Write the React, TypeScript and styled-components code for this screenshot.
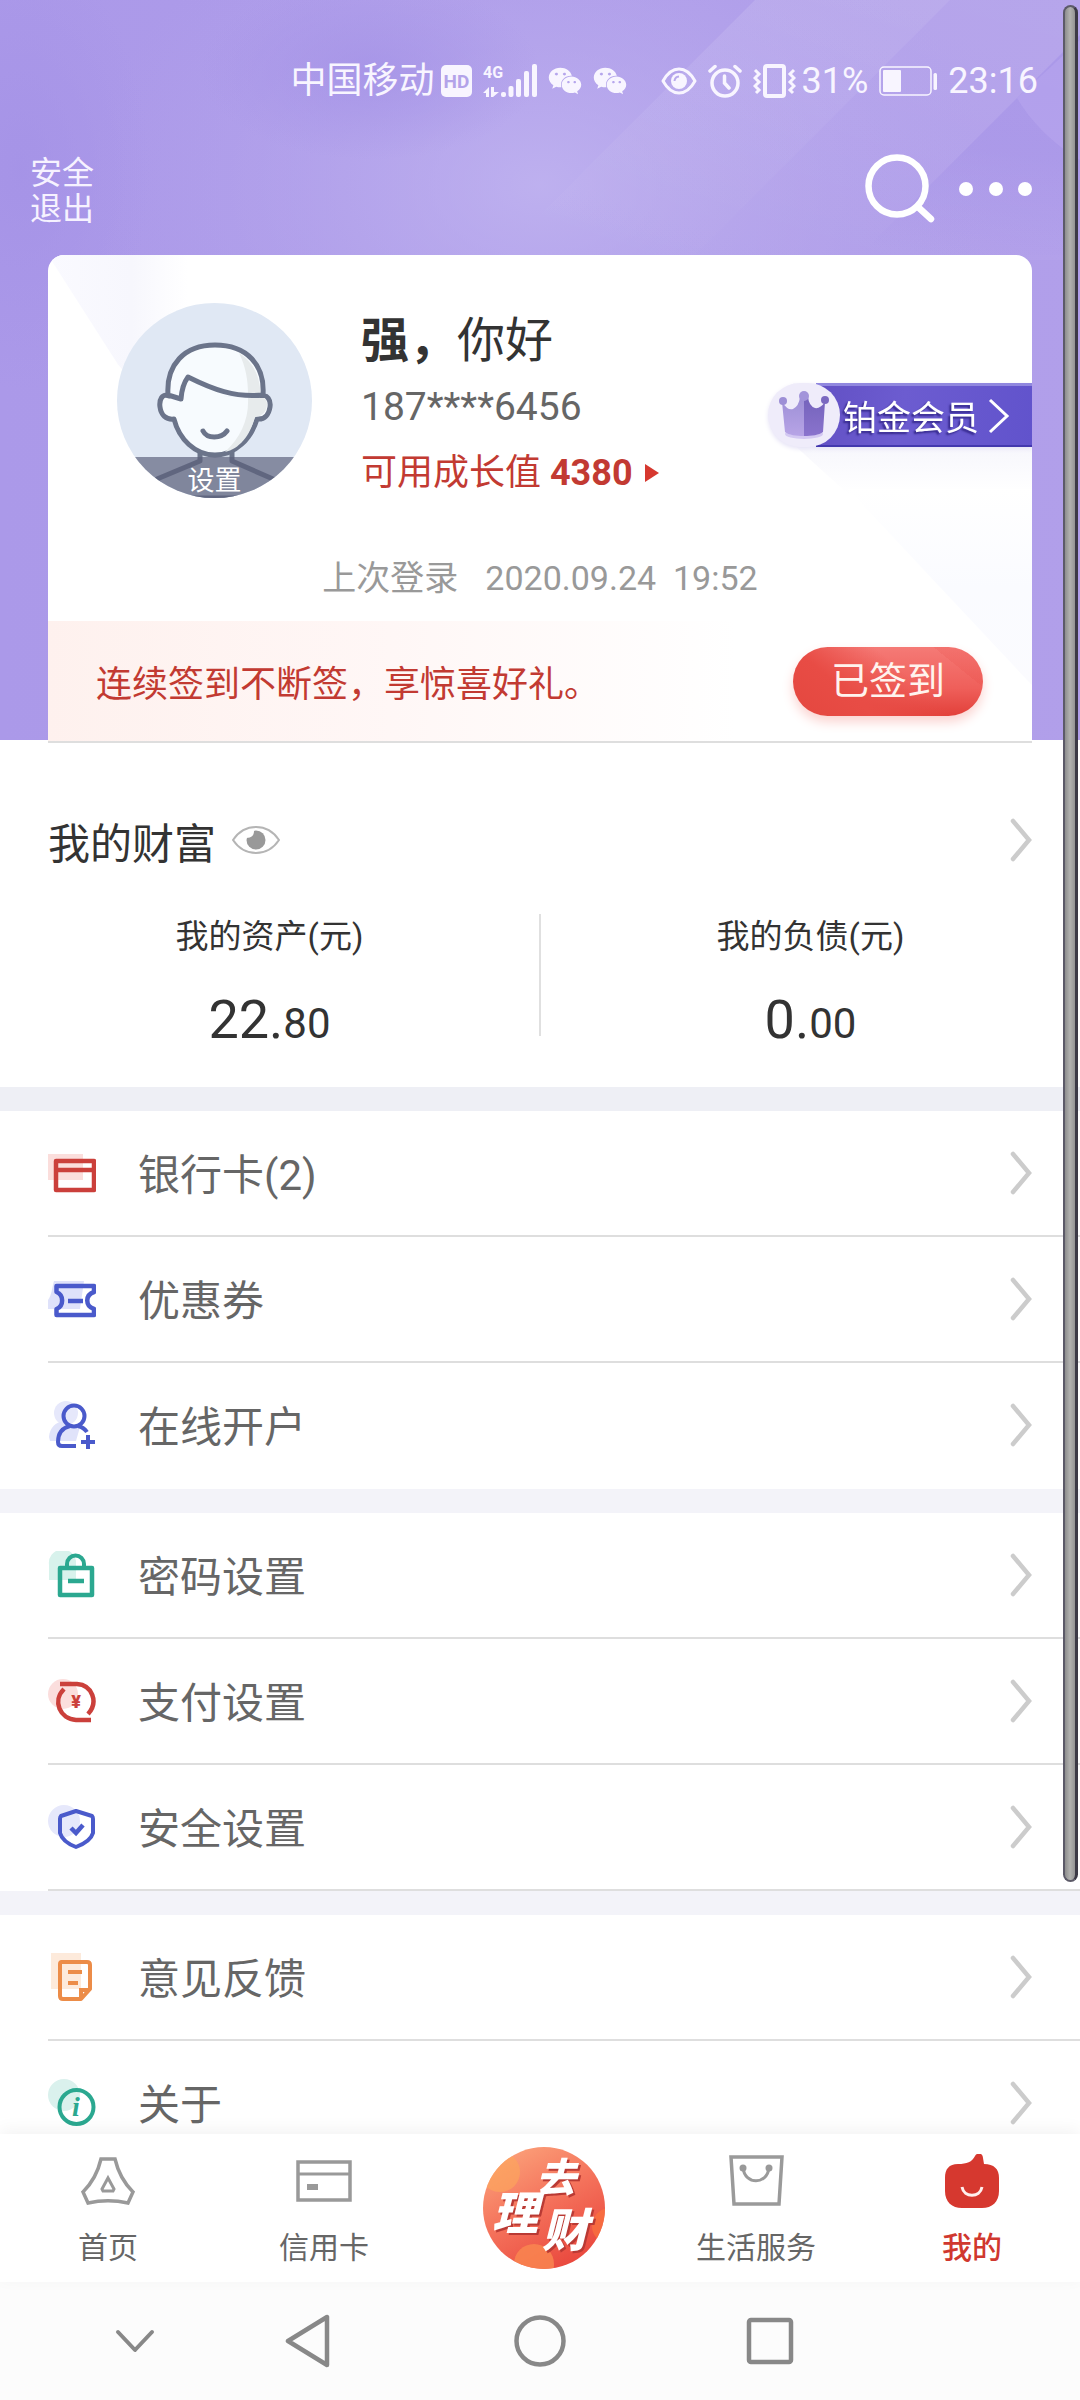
import React from "react";
import styled, { createGlobalStyle } from "styled-components";
import { FaWeixin } from "react-icons/fa";

const GlobalStyle = createGlobalStyle`
  *, *::before, *::after { box-sizing: border-box; }
  body {
    margin: 0;
    background: #fff;
    color: #333;
    font-family: Roboto, "Noto Sans CJK SC", sans-serif;
  }
  button {
    font: inherit;
    color: inherit;
    border: 0;
    padding: 0;
    background: none;
    cursor: pointer;
  }
  a { color: inherit; text-decoration: none; }
  svg { display: block; flex: none; }
  h1, h2, p { margin: 0; font-size: inherit; font-weight: 400; }
`;

/* ---------- shell ---------- */

const Screen = styled.div`
  position: relative;
  display: flex;
  flex-direction: column;
  height: 100vh;
  overflow: hidden;
`;

const Content = styled.main`
  flex: 1;
  min-height: 0;
  overflow: hidden;
`;

const ScrollThumb = styled.div`
  position: absolute;
  top: 5px;
  right: 2px;
  width: 15px;
  height: 1877px;
  border: 2px solid #5c5a68;
  border-right: 3px solid #3c3a46;
  border-radius: 8px;
  background: linear-gradient(90deg, #8e8e8e, #b2b2b0 50%, #949494);
`;

/* ---------- header ---------- */

const Header = styled.header`
  position: relative;
  display: flow-root;
  background: linear-gradient(90deg, #ab99e9 0, #b19fea 100%);
`;

const HeaderArt = styled.svg`
  position: absolute;
  inset: 0;
  width: 100%;
  height: 100%;
`;

const StatusBar = styled.div`
  position: relative;
  display: flex;
  align-items: center;
  justify-content: flex-end;
  gap: 11px;
  height: 130px;
  padding: 32px 42px 0 0;
  color: #f8f5ff;
  font-size: 36px;
  line-height: 44px;
`;

const StatusGroup = styled.span<{ $lead?: boolean }>`
  display: flex;
  align-items: center;
  gap: 6px;
  margin-left: ${(p) => (p.$lead ? "23px" : "0")};
`;

const TopBar = styled.div`
  position: relative;
  display: flex;
  align-items: center;
  justify-content: space-between;
  height: 118px;
  padding: 0 46px 0 30px;
  color: #fff;
`;

const LogoutButton = styled.button`
  width: 64px;
  padding-top: 3px;
  color: #f6f2ff;
  font-size: 32px;
  line-height: 36px;
`;

const TopActions = styled.div`
  display: flex;
  align-items: center;
  gap: 23px;
`;

/* ---------- profile card ---------- */

const Card = styled.section`
  position: relative;
  margin: 7px 48px -3px;
  border-bottom: 2px solid #dedede;
  border-radius: 16px 16px 0 0;
  background: #fff;
  overflow: hidden;
`;

const CardArt = styled.svg`
  position: absolute;
  inset: 0;
  width: 100%;
  height: 100%;
`;

const Profile = styled.div`
  position: relative;
  display: flex;
  align-items: flex-start;
  padding: 48px 0 0 69px;
`;

const Avatar = styled.button`
  position: relative;
  width: 195px;
  height: 195px;
  border-radius: 50%;
  overflow: hidden;
`;

const AvatarLabel = styled.span`
  position: absolute;
  inset: auto 0 0;
  height: 41px;
  background: rgba(91, 96, 122, 0.68);
  color: #fff;
  font-size: 27px;
  line-height: 48px;
  text-align: center;
`;

const ProfileText = styled.div`
  flex: 1;
  margin-left: 49px;
`;

const Greeting = styled.h1`
  font-size: 48px;
  line-height: 76px;
`;

const Phone = styled.p`
  color: #666;
  font-size: 39px;
  line-height: 56px;
`;

const Growth = styled.a`
  display: flex;
  align-items: center;
  gap: 12px;
  color: #c23a32;
  font-size: 36px;
  line-height: 76px;
`;

const MemberBadge = styled.a`
  display: flex;
  align-items: center;
  width: 264px;
  height: 64px;
  margin-top: 80px;
  filter: drop-shadow(0 2px 2px #e6e3f6);
`;

const BadgeDisc = styled.span`
  position: relative;
  z-index: 1;
  display: grid;
  place-items: center;
  width: 72px;
  height: 64px;
  border-radius: 32px;
  background: #efecfa;
`;

const BadgeBody = styled.span`
  display: flex;
  align-items: center;
  flex: 1;
  height: 64px;
  gap: 9px;
  margin-left: -24px;
  padding-left: 27px;
  border-top: 3px solid #9087df;
  border-bottom: 2px solid #4338ae;
  background: linear-gradient(100deg, #6250c4, #6c5cd0 40%, #6153cc);
  color: #fff;
  font-size: 34px;
  text-shadow: -2px 2px 2px #35298c;
  white-space: nowrap;
`;

const LastLogin = styled.p`
  position: relative;
  display: flex;
  justify-content: center;
  gap: 27px;
  padding: 45px 0 21px;
  color: #999;
  font-size: 34px;
  line-height: 44px;
  white-space: pre;
`;

const SignStrip = styled.div`
  position: relative;
  display: flex;
  align-items: center;
  justify-content: space-between;
  height: 120px;
  padding: 0 49px 0 48px;
  background: linear-gradient(90deg, #fef1ee 0, #fff7f6 35%, rgba(255, 252, 252, 0) 70%);
  color: #c23a32;
  font-size: 36px;
`;

const SignButton = styled.button`
  width: 190px;
  height: 69px;
  border-radius: 35px;
  background:
    linear-gradient(39deg, transparent 82%, rgba(226, 56, 50, 0.12) 82%),
    linear-gradient(40deg, #e4473f 0, #e84c45 30%, transparent 60%),
    linear-gradient(#f57a76, #ef5f5a 60%, #e2403a);
  box-shadow: 0 6px 12px #fbd3d0;
  color: #fff3ee;
  font-size: 38px;
  line-height: 68px;
`;

/* ---------- wealth ---------- */

const Wealth = styled.section`
  padding: 68px 0 25px;
`;

const WealthHead = styled.div`
  display: flex;
  align-items: center;
  height: 64px;
  padding: 0 48px;
  gap: 15px;
  font-size: 42px;
`;

const Push = styled.span`
  margin-left: auto;
`;

const Figures = styled.div`
  display: grid;
  grid-template-columns: 1fr 2px 1fr;
  margin-top: 42px;
`;

const Figure = styled.div`
  display: flex;
  flex-direction: column;
  align-items: center;
  gap: 22px;
`;

const FigureLabel = styled.span`
  font-size: 33px;
  line-height: 46px;
`;

const Amount = styled.span`
  font-size: 54px;
  line-height: 76px;
`;

const Cents = styled.span`
  font-size: 42px;
`;

const Rule = styled.span`
  height: 122px;
  background: #e0e0e0;
`;

/* ---------- menu ---------- */

const MenuGroup = styled.nav<{ $tone?: string; $closed?: boolean }>`
  border-top: 24px solid ${(p) => p.$tone ?? "#f3f3f9"};

  a:last-child {
    border-bottom-color: ${(p) => (p.$closed ? "#dedede" : "transparent")};
  }
`;

const MenuRow = styled.a`
  display: flex;
  align-items: center;
  height: 126px;
  margin-left: 48px;
  padding-right: 48px;
  border-bottom: 2px solid #dedede;
  color: #666;
  font-size: 42px;
`;

const MenuLabel = styled.span`
  flex: 1;
  margin-left: 42px;
  padding-bottom: 3px;
`;

/* ---------- bottom bars ---------- */

const TabBar = styled.nav`
  position: relative;
  display: grid;
  grid-template-columns: repeat(5, 1fr);
  height: 148px;
  background: #fff;
  box-shadow: 0 -4px 16px rgba(0, 0, 0, 0.05);
`;

const Tab = styled.a<{ $active?: boolean }>`
  display: flex;
  flex-direction: column;
  align-items: center;
  gap: 16px;
  padding-top: 20px;
  color: ${(p) => (p.$active ? "#d0382f" : "#666")};
  font-size: 30px;
  font-weight: ${(p) => (p.$active ? 500 : 400)};
  line-height: 44px;
`;

const CenterTab = styled.a`
  display: flex;
  justify-content: center;
  padding-top: 12px;
`;

const LogoText = styled.g`
  fill: #fff;
  font-family: "Noto Sans CJK SC", sans-serif;
  font-style: italic;
  font-weight: 900;
  text-anchor: middle;
  filter: drop-shadow(2px 2px 0 #b93a34);
`;

const SystemNav = styled.div`
  display: grid;
  grid-template-columns: 78fr 114fr 232fr 232fr 228fr 196fr;
  height: 118px;
  background: #fcfcfc;
`;

const SystemKey = styled.button`
  display: grid;
  place-items: center;
`;

/* ---------- drawings ---------- */

const Chevron = () => (
  <svg width="22" height="44" viewBox="0 0 22 44" fill="none" stroke="#ccc" strokeWidth="4.500" strokeLinecap="round">
    <path d="M3 3 19 22 3 41" />
  </svg>
);

const HdIcon = () => (
  <svg width="31" height="32" viewBox="0 0 31 32">
    <rect width="31" height="32" rx="5" fill="#f8f5ff" />
    <text x="15.500" y="23" textAnchor="middle" fontFamily="Roboto, sans-serif" fontWeight="700" fontSize="19" fill="#b3a3e9">HD</text>
  </svg>
);

const SignalIcon = () => (
  <svg width="54" height="34" viewBox="0 0 54 34" fill="#f8f5ff">
    <text x="0" y="14" fontFamily="Roboto, sans-serif" fontWeight="700" fontSize="16">4G</text>
    <path d="M0 29 6 23V33H3V29ZM8 23H11V28H16L10 33H8Z" />
    <rect x="18" y="28" width="5" height="5" rx="2" />
    <rect x="25.500" y="22" width="5" height="11" rx="2" />
    <rect x="33" y="15" width="5" height="18" rx="2" />
    <rect x="41" y="7" width="5" height="26" rx="2" />
    <rect x="49" y="0" width="5" height="33" rx="2" />
  </svg>
);

const EyeCareIcon = () => (
  <svg width="36" height="28" viewBox="0 0 36 28" fill="none" stroke="#f8f5ff" strokeWidth="3">
    <path d="M2 14C7 5 12 2 18 2S29 5 34 14C29 23 24 26 18 26S7 23 2 14Z" strokeLinejoin="round" />
    <circle cx="18" cy="14" r="8" fill="#f8f5ff" stroke="none" />
    <path d="M13.500 14A5 5 0 0 1 18 9.500" stroke="#b9aaec" strokeWidth="2" />
  </svg>
);

const AlarmIcon = () => (
  <svg width="34" height="34" viewBox="0 0 34 34" fill="none" stroke="#f8f5ff" strokeWidth="3.500" strokeLinecap="round">
    <circle cx="17" cy="19" r="13" />
    <path d="M16.500 12V19L21 24M2 7 7 2.500M32 7 27 2.500" />
  </svg>
);

const VibrateIcon = () => (
  <svg width="43" height="34" viewBox="0 0 43 34" fill="none" stroke="#f8f5ff" strokeWidth="3">
    <rect x="12" y="2" width="19" height="30" rx="2" strokeWidth="4" />
    <path d="M2 6 6 10 2 14 6 18 2 22 6 26 3 29M41 6 37 10 41 14 37 18 41 22 37 26 40 29" />
  </svg>
);

const BatteryIcon = () => (
  <svg width="58" height="30" viewBox="2 0 58 30" fill="none">
    <rect x="3" y="1" width="51" height="28" rx="4" stroke="#f8f5ff" strokeWidth="1.500" />
    <rect x="6" y="4" width="18" height="22" rx="1" fill="#f8f5ff" />
    <rect x="56.500" y="7" width="3.500" height="17" rx="1.500" fill="#f8f5ff" />
  </svg>
);

const SearchIcon = () => (
  <svg width="70" height="70" viewBox="0 0 70 70" fill="none" stroke="#fff" strokeWidth="6.500" strokeLinecap="round">
    <circle cx="32" cy="32" r="28.500" />
    <path d="M53 53 66 65" />
  </svg>
);

const MoreIcon = () => (
  <svg width="76" height="16" viewBox="0 0 76 16" fill="#fff">
    <circle cx="8" cy="8" r="7" />
    <circle cx="38" cy="8" r="7" />
    <circle cx="67" cy="8" r="7" />
  </svg>
);

const AvatarArt = () => (
  <svg width="195" height="195" viewBox="0 0 195 195" fill="none" stroke="#6b748a" strokeWidth="5" strokeLinejoin="round" strokeLinecap="round">
    <rect width="195" height="195" fill="#e0e8f4" stroke="none" />
    <path d="M83 148V158L40 176 28 195H170L156 176 115 158V148" fill="#cdd5e2" />
    <path d="M52 93C45 90 42 97 43 104C44 112 49 117 57 116C62 136 78 152 98 152C118 152 134 136 140 116C148 117 152 111 153 104C154 97 150 91 145 94" fill="#f7fbfe" />
    <path d="M51 92C49 62 67 42 98 42C130 42 148 62 146 92L64 96Z" fill="#f7fbfe" stroke="none" />
    <path d="M122 50C138 60 143 76 143.500 91H131C131 78 129 64 122 50ZM131 95H148C153 103 148 113 138 114C133 133 122 146 108 149C124 134 132 116 131 95Z" fill="#e7ebec" stroke="none" />
    <path d="M51 92C49 62 67 42 98 42C130 42 148 62 146 92C118 95 95 86 71 74Q65 82 64 96ZM86 128C90 136 104 136 110 128" />
  </svg>
);

const CrownIcon = () => (
  <svg width="52" height="52" viewBox="0 0 52 52">
    <defs>
      <linearGradient id="crownLeft" x2="0" y2="1">
        <stop offset="0" stopColor="#9d8fd6" />
        <stop offset="1" stopColor="#b7a4e6" />
      </linearGradient>
      <linearGradient id="crownRight" x2="0" y2="1">
        <stop offset="0" stopColor="#7463bb" />
        <stop offset="1" stopColor="#8a73cd" />
      </linearGradient>
    </defs>
    <ellipse cx="26" cy="45" rx="19" ry="5" fill="#d3c8f2" />
    <path d="M4 13Q10 22 15 20Q21 17 22 8H26V47C18 47 11 46 7 43Z" fill="url(#crownLeft)" />
    <path d="M26 8H30Q31 17 37 19Q42 20 47 13L45 43C41 46 34 47 26 47Z" fill="url(#crownRight)" />
    <circle cx="5" cy="12" r="4" fill="#9d8fd6" />
    <circle cx="26" cy="7" r="5" fill="#a294da" />
    <circle cx="47" cy="11" r="4" fill="#7b69c0" />
  </svg>
);

const EyeIcon = () => (
  <svg width="50" height="30" viewBox="0 0 50 30" fill="none">
    <path d="M2 15C8 6 15 2 25 2S42 6 48 15C42 24 35 28 25 28S8 24 2 15Z" stroke="#b5b5b5" strokeWidth="2" />
    <circle cx="25" cy="15" r="9.500" fill="#999" />
    <path d="M15 6H23C23 10 21 13 15 13Z" fill="#fff" />
  </svg>
);

const RED = "#cb403b";
const BLUE = "#4a5acb";
const GREEN = "#2ba890";
const ORANGE = "#ec8c48";

const icon = (tone: string, drawing: React.ReactNode) => (
  <svg width="48" height="48" viewBox="0 0 48 48" fill="none" stroke={tone} strokeWidth="4.500">
    {drawing}
  </svg>
);

const icons = {
  card: icon(RED, <>
    <rect x="0" y="5" width="35" height="26" fill="#fbdedc" stroke="none" />
    <rect x="8" y="12" width="38" height="29" strokeLinejoin="round" />
    <path d="M7 21H46" />
  </>),
  coupon: icon(BLUE, <>
    <path d="M0 25C4 20 4 12 6 6H36L32 34H0Z" fill="#dfe2fa" stroke="none" />
    <path d="M8.500 11H46V17C37 20 37 31 46 34V40H8.500V34C16 31 16 20 8.500 17Z" strokeLinejoin="round" />
    <path d="M20 26H35" />
  </>),
  account: icon(BLUE, <>
    <circle cx="18" cy="12" r="12" fill="#e6e8fb" stroke="none" />
    <path d="M1 36C2 24 12 18 20 22L32 26 28 40H2Z" fill="#e0e3fa" stroke="none" />
    <circle cx="26" cy="15" r="10.500" strokeWidth="4" />
    <path d="M22 25C14 27 10 33 10 41Q10 45 14 45H28M30 25C34 26 37 28 39 31" strokeWidth="4" />
    <path d="M33 41H47M40 34V48" strokeWidth="4" />
  </>),
  lock: icon(GREEN, <>
    <path d="M1 29V14A13 13 0 0 1 28 10V29Z" fill="#d8f2ec" stroke="none" />
    <rect x="12" y="17" width="32" height="27" strokeLinejoin="round" />
    <path d="M19 17V13A8.500 8.500 0 0 1 36 13V17" strokeWidth="4" />
    <path d="M20 30H36" />
  </>),
  pay: icon(RED, <>
    <circle cx="15" cy="17" r="15" fill="#fbdedd" stroke="none" />
    <path d="M12 7H29C44 8 51 25 40 37" strokeWidth="4.500" />
    <path d="M43 43H28C12 42 4 24 16 12" strokeWidth="4.500" />
    <text x="28" y="31" textAnchor="middle" fontFamily="Roboto, sans-serif" fontWeight="900" fontSize="18" fill={RED} stroke="none">¥</text>
  </>),
  shield: icon(BLUE, <>
    <circle cx="16" cy="18" r="16" fill="#e6e8fb" stroke="none" />
    <path d="M28 8 44 13Q45 14 45 16V30C43 37 36 41 28 44C20 41 14 37 12 30V16Q12 14 13 13Z" strokeLinejoin="round" strokeWidth="4" />
    <path d="M23 25 28 30 35 22" />
  </>),
  feedback: icon(ORANGE, <>
    <rect x="3" y="0" width="30" height="36" fill="#fdeadb" stroke="none" />
    <path d="M13 9H39Q42 9 42 12V36L33 46H15Q12 46 12 43V11Q12 9 14 9Z" strokeLinejoin="round" strokeWidth="4" />
    <path d="M33 45V37H41" strokeWidth="4" />
    <path d="M20 19H34M20 30H30" strokeWidth="4" />
  </>),
  about: icon(GREEN, <>
    <circle cx="16" cy="16" r="16" fill="#daf1ed" stroke="none" />
    <circle cx="28.500" cy="28" r="17" strokeWidth="4" />
    <text x="28" y="37" textAnchor="middle" fontFamily="Liberation Serif, serif" fontStyle="italic" fontWeight="700" fontSize="28" fill={GREEN} stroke="none">i</text>
  </>),
};

const tabIcons = {
  home: (
    <svg width="56" height="56" viewBox="0 0 56 56" fill="none" stroke="#999" strokeWidth="3.500">
      <path d="M21 5H35C38 18 44 29 53 38L48 49C35 46 21 46 8 49L3 38C12 29 18 18 21 5Z" />
      <path d="M28 24 34 35 33 37H23L22 35Z" strokeWidth="3" />
    </svg>
  ),
  credit: (
    <svg width="56" height="56" viewBox="0 0 56 56" fill="none" stroke="#999" strokeWidth="3.500">
      <rect x="2" y="8" width="52" height="38" />
      <path d="M2 20H54" strokeWidth="3" />
      <rect x="11" y="30" width="11" height="6" fill="#999" stroke="none" />
    </svg>
  ),
  life: (
    <svg width="56" height="56" viewBox="0 0 56 56" fill="none" stroke="#9a9a9a" strokeWidth="3.500">
      <path d="M3 3H54L51 50H6Z" />
      <path d="M15 14C17 31 39 31 41 14" strokeWidth="3" />
      <circle cx="15" cy="14" r="3.500" fill="#999" stroke="none" />
      <circle cx="41" cy="14" r="3.500" fill="#999" stroke="none" />
    </svg>
  ),
  mine: (
    <svg width="56" height="56" viewBox="0 0 56 56">
      <path d="M14 10C23 10 28 8 31 2C33-2 39-1 39 4L40 10C50 10 55 15 55 24V37C55 48 48 54 38 54H18C8 54 1 48 1 37V24C1 15 5 10 14 10Z" fill="#d6382f" />
      <path d="M18 33C20 44 36 44 38 33" fill="none" stroke="#fff0ee" strokeWidth="3" />
    </svg>
  ),
};

const FinanceLogo = () => (
  <svg width="132" height="124" viewBox="0 0 132 124" role="img" aria-label="去理财">
    <defs>
      <linearGradient id="disc" x1="0.200" y1="0" x2="0.800" y2="1">
        <stop offset="0" stopColor="#fca57c" />
        <stop offset="0.500" stopColor="#f4705a" />
        <stop offset="1" stopColor="#e8433a" />
      </linearGradient>
      <clipPath id="discClip"><circle cx="70" cy="62" r="61" /></clipPath>
    </defs>
    <g clipPath="url(#discClip)">
      <rect width="132" height="124" fill="url(#disc)" />
      <circle cx="26" cy="26" r="20" fill="#fca45c" opacity="0.700" />
      <circle cx="60" cy="118" r="20" fill="#fa8850" opacity="0.800" />
      <circle cx="136" cy="80" r="18" fill="#f9703f" opacity="0.800" />
    </g>
    <LogoText>
      <text x="82" y="46" fontSize="40">去</text>
      <text x="41" y="84" fontSize="46">理</text>
      <text x="91" y="101" fontSize="46">财</text>
    </LogoText>
  </svg>
);

/* ---------- data ---------- */

const groups = [
  { id: "assets", tone: "#eeeff5", closed: false, rows: [
    { label: "银行卡(2)", art: icons.card },
    { label: "优惠券", art: icons.coupon },
    { label: "在线开户", art: icons.account },
  ] },
  { id: "settings", tone: "#f3f3f9", closed: true, rows: [
    { label: "密码设置", art: icons.lock },
    { label: "支付设置", art: icons.pay },
    { label: "安全设置", art: icons.shield },
  ] },
  { id: "help", tone: "#f3f3f9", closed: false, rows: [
    { label: "意见反馈", art: icons.feedback },
    { label: "关于", art: icons.about },
  ] },
];

const figures = [
  { label: "我的资产(元)", whole: "22.", cents: "80" },
  { label: "我的负债(元)", whole: "0.", cents: "00" },
];

const FigureBlock = ({ label, whole, cents }: { label: string; whole: string; cents: string }) => (
  <Figure>
    <FigureLabel>{label}</FigureLabel>
    <Amount>{whole}<Cents>{cents}</Cents></Amount>
  </Figure>
);

export default function App() {
  return (
    <>
      <GlobalStyle />
      <Screen>
        <Content>
          <Header>
            <HeaderArt viewBox="0 0 1080 740" preserveAspectRatio="none" aria-hidden="true">
              <defs>
                <radialGradient id="glow" cx="0.500" cy="0.250" r="0.420">
                  <stop offset="0" stopColor="#c3b7f1" stopOpacity="0.750" />
                  <stop offset="1" stopColor="#b6a7ec" stopOpacity="0" />
                </radialGradient>
                <radialGradient id="shade">
                  <stop offset="0" stopColor="#a391e6" stopOpacity="0.700" />
                  <stop offset="1" stopColor="#a391e6" stopOpacity="0" />
                </radialGradient>
                <linearGradient id="beam" x1="0.800" y1="0" x2="0.200" y2="1">
                  <stop offset="0" stopColor="#fff" stopOpacity="0.070" />
                  <stop offset="1" stopColor="#fff" stopOpacity="0" />
                </linearGradient>
                <linearGradient id="facet" x1="0.500" y1="0" x2="0.400" y2="1">
                  <stop offset="0" stopColor="#9f8ce6" stopOpacity="0.500" />
                  <stop offset="0.500" stopColor="#9f8ce6" stopOpacity="0.400" />
                  <stop offset="1" stopColor="#9f8ce6" stopOpacity="0" />
                </linearGradient>
              </defs>
              <rect width="1080" height="740" fill="url(#glow)" />
              <ellipse cx="370" cy="70" rx="170" ry="90" fill="url(#shade)" />
              <ellipse cx="20" cy="170" rx="130" ry="220" fill="url(#shade)" />
              <path d="M755 0H950L690 260H495Z" fill="url(#beam)" />
              <path d="M755 0H1080V260H495Z" fill="url(#beam)" />
              <path d="M1080 35 915 200 860 255H1080Z" fill="url(#facet)" />
              <path d="M1080 40 1017 98C1030 120 1050 142 1080 160Z" fill="#b9a8ef" opacity="0.500" />
            </HeaderArt>
            <StatusBar>
              <StatusGroup>中国移动<HdIcon /></StatusGroup>
              <SignalIcon />
              <FaWeixin size={34} />
              <FaWeixin size={34} />
              <StatusGroup $lead><EyeCareIcon /></StatusGroup>
              <AlarmIcon />
              <StatusGroup><VibrateIcon />31%</StatusGroup>
              <BatteryIcon />
              <span>23:16</span>
            </StatusBar>
            <TopBar>
              <LogoutButton>安全退出</LogoutButton>
              <TopActions>
                <button aria-label="搜索"><SearchIcon /></button>
                <button aria-label="更多"><MoreIcon /></button>
              </TopActions>
            </TopBar>
            <Card>
              <CardArt viewBox="0 0 984 488" preserveAspectRatio="none" aria-hidden="true">
                <defs>
                  <linearGradient id="foldLeft">
                    <stop offset="0" stopColor="#fafaff" />
                    <stop offset="0.600" stopColor="#f7f7fd" />
                    <stop offset="1" stopColor="#fff" />
                  </linearGradient>
                  <linearGradient id="foldRight" x2="0" y2="1">
                    <stop offset="0" stopColor="#fff" />
                    <stop offset="0.500" stopColor="#fafbff" />
                    <stop offset="1" stopColor="#fbfbfe" />
                  </linearGradient>
                  <linearGradient id="badgeCast" x2="0" y2="1">
                    <stop offset="0" stopColor="#f4f4fb" />
                    <stop offset="1" stopColor="#fff" />
                  </linearGradient>
                </defs>
                <path d="M0 0H140V190L70 110Z" fill="url(#foldLeft)" />
                <path d="M730 176 800 240H984V176Z" fill="url(#badgeCast)" />
                <path d="M800 235H984V432Z" fill="url(#foldRight)" />
              </CardArt>
              <Profile>
                <Avatar>
                  <AvatarArt />
                  <AvatarLabel>设置</AvatarLabel>
                </Avatar>
                <ProfileText>
                  <Greeting><b>强，</b>你好</Greeting>
                  <Phone>187****6456</Phone>
                  <Growth href="#growth">
                    <span>可用成长值 <b>4380</b></span>
                    <svg width="14" height="18" viewBox="0 0 14 18"><path d="M0 0 14 9 0 18Z" fill="#d6382f" /></svg>
                  </Growth>
                </ProfileText>
                <MemberBadge href="#member">
                  <BadgeDisc><CrownIcon /></BadgeDisc>
                  <BadgeBody>
                    铂金会员
                    <svg width="22" height="36" viewBox="0 0 22 36" fill="none" stroke="#fff" strokeWidth="3">
                      <path d="M2 2 19 18 2 34" />
                    </svg>
                  </BadgeBody>
                </MemberBadge>
              </Profile>
              <LastLogin>
                <span>上次登录</span>
                <span>2020.09.24  19:52</span>
              </LastLogin>
              <SignStrip>
                <span>连续签到不断签，享惊喜好礼。</span>
                <SignButton>已签到</SignButton>
              </SignStrip>
            </Card>
          </Header>

          <Wealth>
            <WealthHead>
              <h2>我的财富</h2>
              <button aria-label="隐藏金额"><EyeIcon /></button>
              <Push><Chevron /></Push>
            </WealthHead>
            <Figures>
              <FigureBlock {...figures[0]} />
              <Rule />
              <FigureBlock {...figures[1]} />
            </Figures>
          </Wealth>

          {groups.map((group) => (
            <MenuGroup key={group.id} $tone={group.tone} $closed={group.closed}>
              {group.rows.map((row) => (
                <MenuRow key={row.label} href="#menu">
                  {row.art}
                  <MenuLabel>{row.label}</MenuLabel>
                  <Chevron />
                </MenuRow>
              ))}
            </MenuGroup>
          ))}
        </Content>

        <TabBar>
          <Tab href="#home">{tabIcons.home}首页</Tab>
          <Tab href="#credit">{tabIcons.credit}信用卡</Tab>
          <CenterTab href="#finance"><FinanceLogo /></CenterTab>
          <Tab href="#life">{tabIcons.life}生活服务</Tab>
          <Tab href="#mine" $active>{tabIcons.mine}我的</Tab>
        </TabBar>

        <SystemNav>
          <span />
          <SystemKey aria-label="收起">
            <svg width="42" height="26" viewBox="0 0 42 26" fill="none" stroke="#888" strokeWidth="4" strokeLinecap="round" strokeLinejoin="round"><path d="M4 4 21 22 38 4" /></svg>
          </SystemKey>
          <SystemKey aria-label="返回">
            <svg width="48" height="54" viewBox="0 0 48 54" fill="none" stroke="#888" strokeWidth="4.500" strokeLinejoin="round"><path d="M43 3V51L4 27Z" /></svg>
          </SystemKey>
          <SystemKey aria-label="主页">
            <svg width="54" height="54" viewBox="0 0 54 54" fill="none" stroke="#888" strokeWidth="4.500"><circle cx="27" cy="27" r="23.500" /></svg>
          </SystemKey>
          <SystemKey aria-label="最近任务">
            <svg width="48" height="48" viewBox="0 0 48 48" fill="none" stroke="#888" strokeWidth="4.500"><rect x="3" y="3" width="42" height="42" rx="2" /></svg>
          </SystemKey>
        </SystemNav>
        <ScrollThumb />
      </Screen>
    </>
  );
}
